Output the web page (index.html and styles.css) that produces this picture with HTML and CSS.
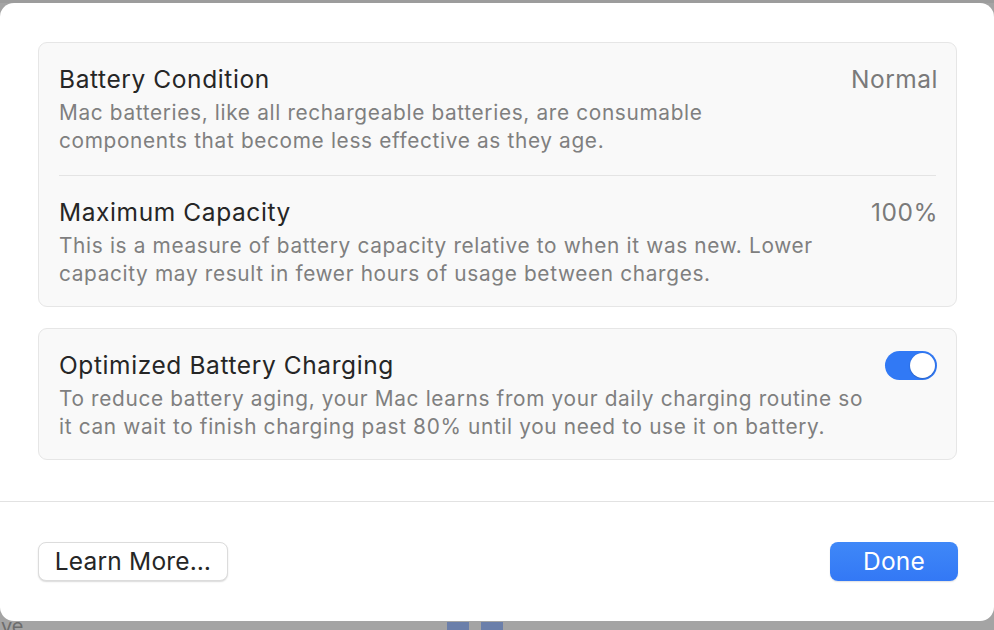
FILE: index.html
```html
<!DOCTYPE html>
<html>
<head>
<meta charset="utf-8">
<link rel="stylesheet" href="styles.css">
</head>
<body>
<div class="backdrop-top"></div>
<div class="sheet">
  <div class="content">
    <section class="card">
      <div class="row">
        <div class="row-head">
          <span class="title">Battery Condition</span>
          <span class="value">Normal</span>
        </div>
        <p class="desc">Mac batteries, like all rechargeable batteries, are consumable<br>components that become less effective as they age.</p>
      </div>
      <div class="divider"></div>
      <div class="row">
        <div class="row-head">
          <span class="title">Maximum Capacity</span>
          <span class="value">100%</span>
        </div>
        <p class="desc">This is a measure of battery capacity relative to when it was new. Lower<br>capacity may result in fewer hours of usage between charges.</p>
      </div>
    </section>
    <section class="card">
      <div class="row">
        <div class="row-head">
          <span class="title">Optimized Battery Charging</span>
          <span class="toggle on"><span class="knob"></span></span>
        </div>
        <p class="desc">To reduce battery aging, your Mac learns from your daily charging routine so<br>it can wait to finish charging past 80% until you need to use it on battery.</p>
      </div>
    </section>
  </div>
  <div class="footer">
    <button class="btn">Learn More…</button>
    <button class="btn primary">Done</button>
  </div>
</div>
<div class="backdrop-bottom">
  <span class="bg-text">ve</span>
  <span class="bg-bars"><span class="bar"></span><span class="bar"></span></span>
</div>
</body>
</html>
```
FILE: styles.css
```css
* { box-sizing: border-box; }
html, body { margin: 0; padding: 0; }
body {
  width: 994px;
  height: 630px;
  overflow: hidden;
  background: #a4a4a4;
  font-family: "Inter", "Liberation Sans", sans-serif;
}
.backdrop-top {
  height: 3px;
  background: #9c9c9c;
}
.sheet {
  height: 618px;
  width: 994px;
  background: #ffffff;
  border-radius: 14px;
  display: flex;
  flex-direction: column;
}
.content {
  padding: 39px 37px 0 38px;
  display: flex;
  flex-direction: column;
  gap: 21px;
}
.card {
  background: #f9f9f9;
  border: 1px solid #e6e6e6;
  border-radius: 9px;
  padding: 0 20px;
}
.row {
  padding: 21px 0 18px;
}
.row:first-child:not(:last-child) {
  padding-bottom: 20px;
}
.row-head {
  display: flex;
  justify-content: space-between;
  align-items: center;
  height: 30px;
}
.title {
  font-size: 24.5px;
  color: #262626;
  line-height: 30px;
  letter-spacing: 0.6px;
}
.value {
  font-size: 24.5px;
  color: #7a7a7a;
  line-height: 30px;
  letter-spacing: 0.5px;
  margin-right: -2px;
}
.desc {
  margin: 5px 0 0;
  font-size: 20.8px;
  line-height: 28px;
  color: #7f7f7f;
  letter-spacing: 0.66px;
}
.divider {
  height: 1px;
  background: #e4e4e4;
}
.toggle {
  width: 52px;
  height: 29px;
  border-radius: 15px;
  background: #3179f5;
  display: flex;
  align-items: center;
  justify-content: flex-end;
  padding: 2px;
  margin-right: -1px;
}
.knob {
  width: 25px;
  height: 25px;
  border-radius: 50%;
  background: #ffffff;
  box-shadow: 0 0.5px 1.5px rgba(0,0,0,0.3);
}
.footer {
  margin-top: 41px;
  border-top: 1px solid #e2e2e2;
  padding: 40px 36px 0 38px;
  display: flex;
  justify-content: space-between;
}
.btn {
  height: 39px;
  border-radius: 8px;
  font-family: "Inter", "Liberation Sans", sans-serif;
  font-size: 24.5px;
  line-height: 37px;
  color: #262626;
  background: #ffffff;
  border: 1px solid #dcdcdc;
  box-shadow: 0 1px 1.5px rgba(0,0,0,0.15);
  width: 190px;
  padding: 0 0 1px;
  letter-spacing: 0.2px;
}
.btn.primary {
  width: 128px;
  color: #ffffff;
  border: none;
  background: linear-gradient(#3f88f8, #3378f5);
  box-shadow: 0 1px 1.5px rgba(0,0,0,0.12);
}
.backdrop-bottom {
  margin-top: 1px;
  height: 8px;
  display: flex;
  align-items: flex-start;
}
.bg-text {
  font-size: 20px;
  line-height: 8px;
  color: #6d6d6d;
  padding-left: 1px;
  overflow: hidden;
  height: 8px;
}
.bg-bars {
  display: flex;
  gap: 12px;
  margin-left: 423px;
}
.bar {
  width: 22px;
  height: 8px;
  background: #6b7faa;
}
```
